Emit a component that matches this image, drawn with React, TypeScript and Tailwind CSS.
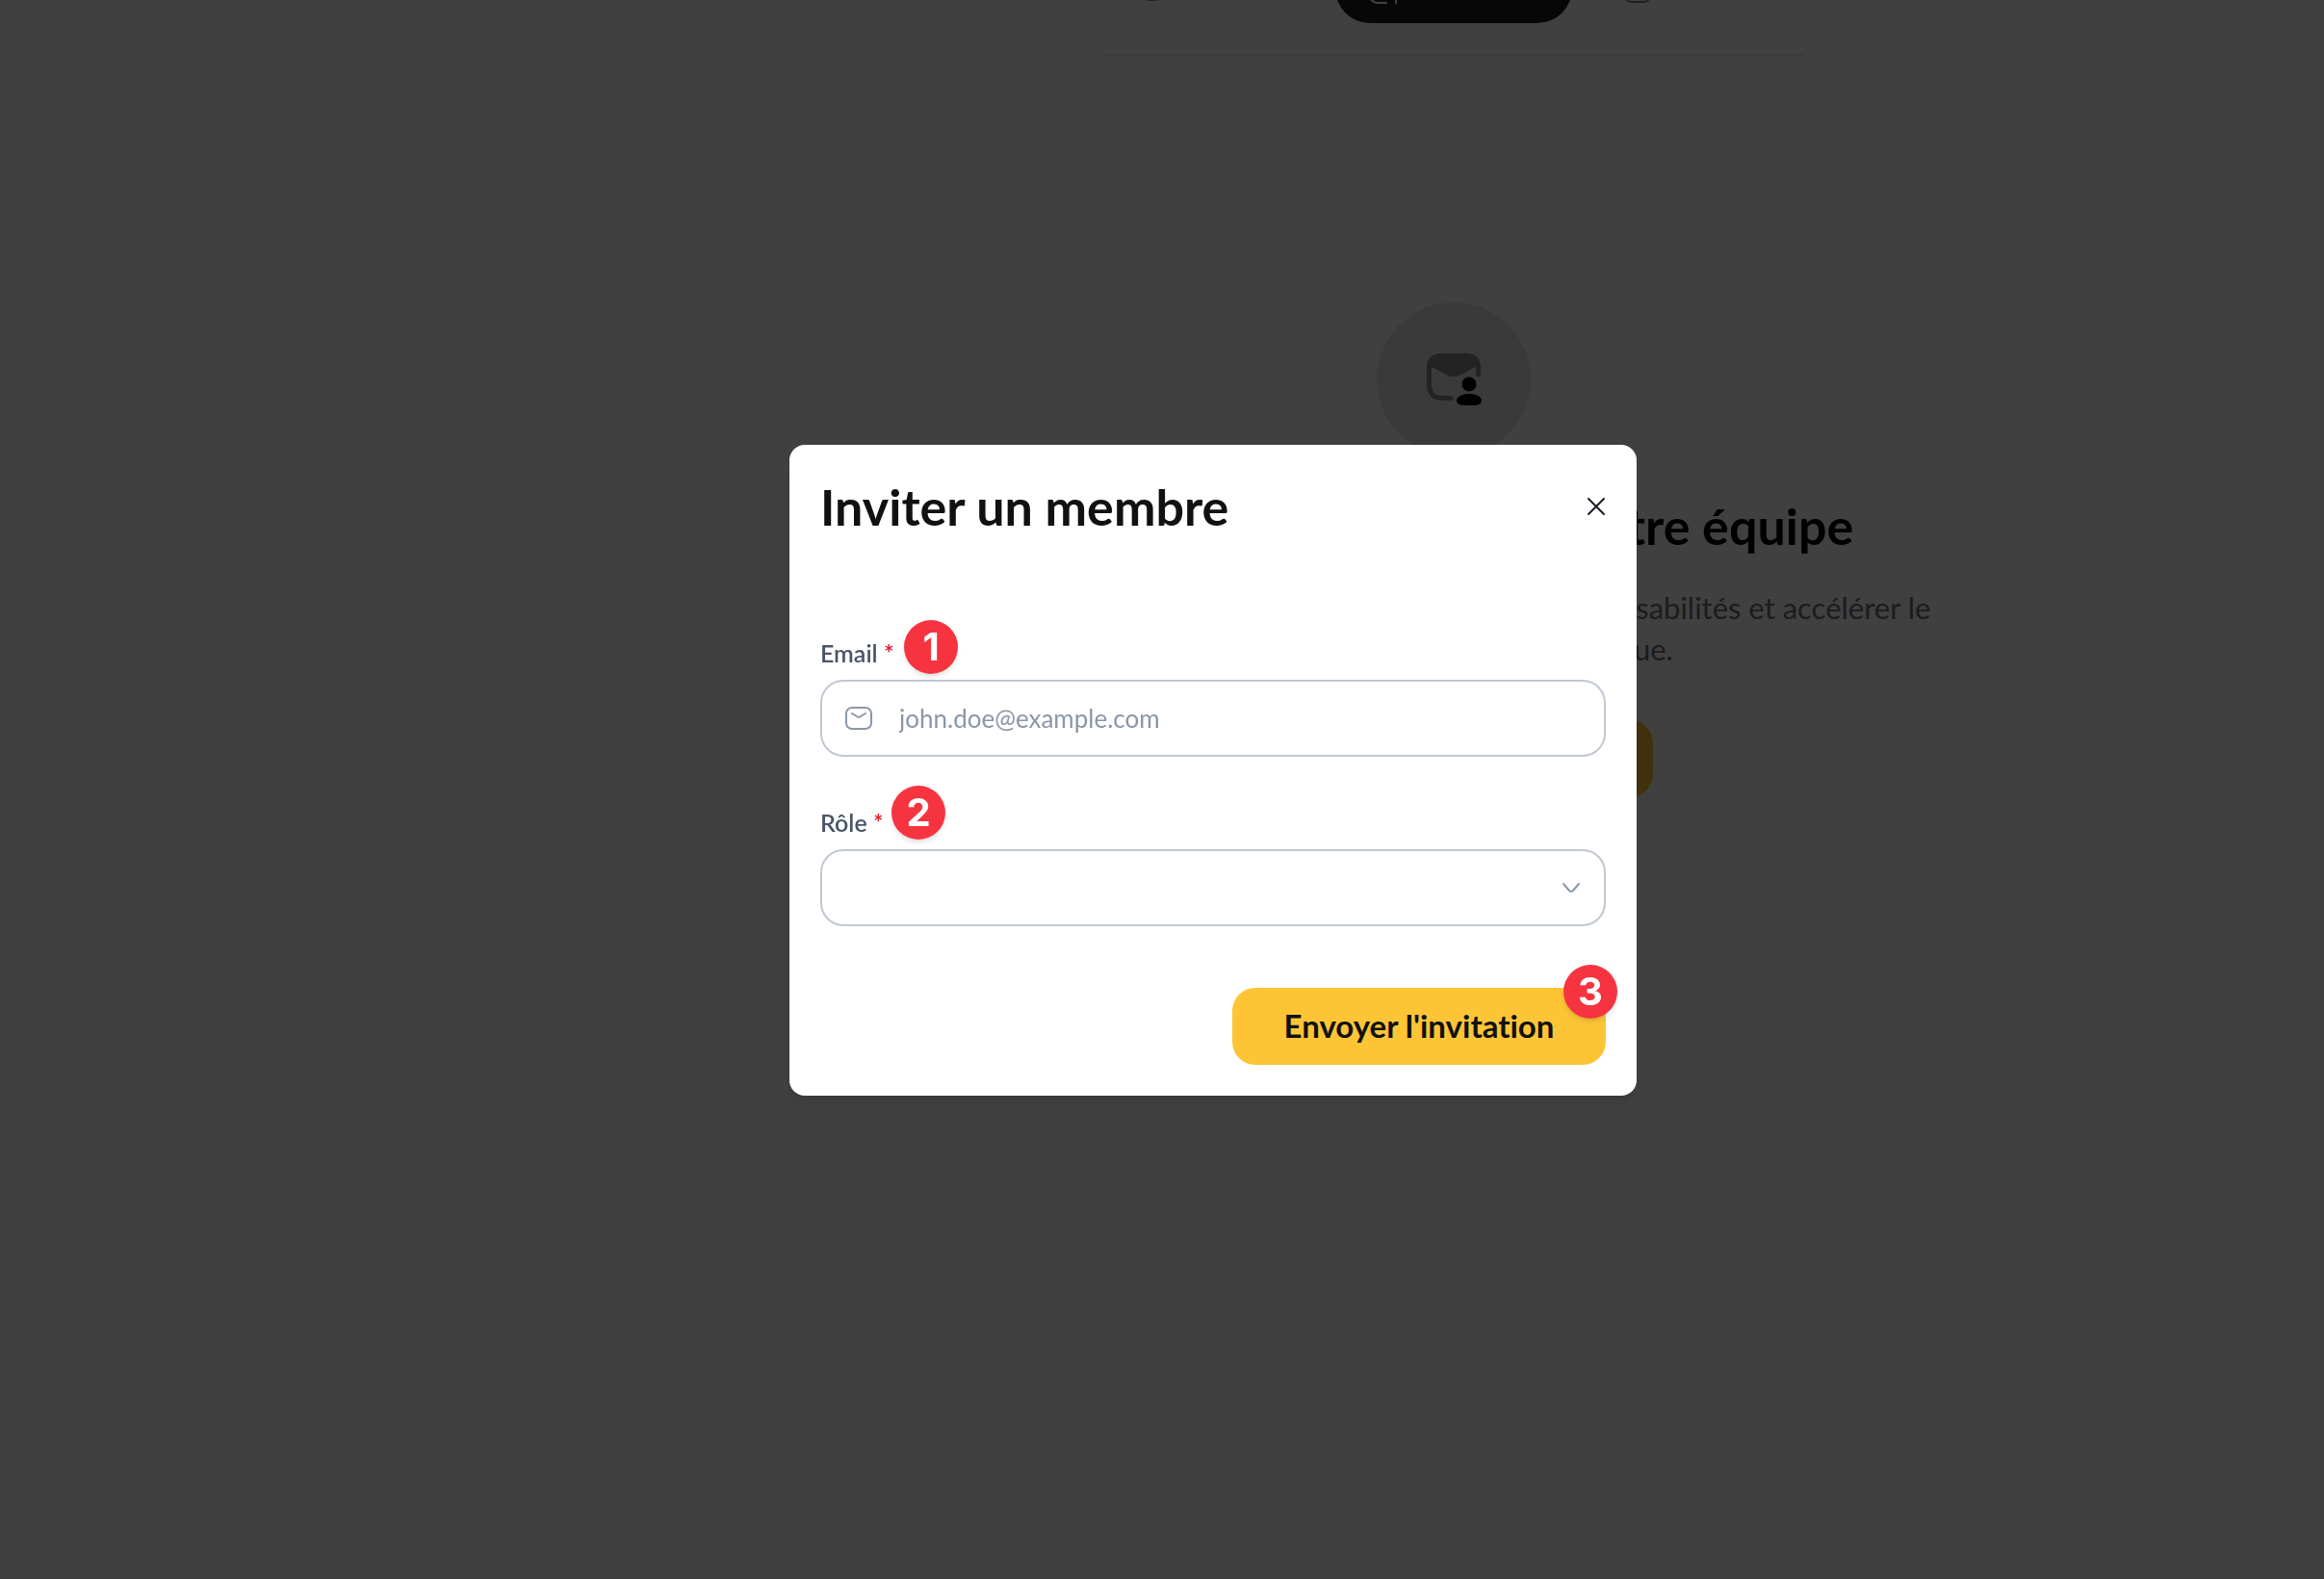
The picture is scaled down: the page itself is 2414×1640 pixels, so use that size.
import { useState } from 'react';
import type { ReactNode } from 'react';
import { clsx } from 'clsx';

const tabs = [
  { id: 'profile', icon: ProfileIcon, label: 'Profil', pad: 'pl-8' },
  { id: 'team', icon: TeamIcon, label: 'Équipe', pad: 'pl-7' },
  { id: 'billing', icon: BillingIcon, label: 'Offre', pad: 'pl-12' },
];

function ProfileIcon() {
  return (
    <svg viewBox="0 0 40 40" className="h-10 w-10" fill="none" stroke="currentColor" strokeWidth="2">
      <circle cx="20" cy="11" r="7" />
      <path d="M6 28c0-5 6-8 14-8s14 3 14 8-6 8-14 8-14-3-14-8Z" />
    </svg>
  );
}

function TeamIcon() {
  return (
    <svg viewBox="0 0 40 40" className="h-10 w-10" fill="none" stroke="currentColor" strokeWidth="2">
      <path d="M26 39h-9c-6 0-9-3-9-9V17c0-6 3-9 9-9h10c6 0 9 3 9 9" />
      <path d="M35 26v14" />
    </svg>
  );
}

function BillingIcon() {
  return (
    <svg viewBox="0 0 40 40" className="h-10 w-10" fill="none" stroke="currentColor" strokeWidth="2">
      <rect x="6" y="10" width="28" height="28" rx="8" />
      <path d="M6 19h28" />
    </svg>
  );
}

function InviteIcon() {
  return (
    <svg viewBox="0 0 60 60" className="h-15 w-15" fill="none">
      <path
        d="M27 49.500H18C9 49.500 4.500 45 4.500 35V20C4.500 10 9 6 18 6h24c9 0 13.500 4 13.500 13v6"
        stroke="#8c8c8c"
        strokeWidth="5"
        strokeLinecap="round"
      />
      <path d="M2 19C2 8 7 3 18 3h24c11 0 16 5 16 16l-5-2-15 8c-6 3-10 3-16 0L7 17Z" fill="#8c8c8c" />
      <circle cx="46" cy="35" r="7.500" fill="#000" />
      <path d="M33 52c0-4 6-7 13-7s13 3 13 7c0 3-3 5-8 5H41c-5 0-8-2-8-5Z" fill="#000" />
    </svg>
  );
}

function MailIcon() {
  return (
    <svg viewBox="0 0 28 24" className="h-6 w-7" fill="none" stroke="currentColor" strokeWidth="2" strokeLinecap="round">
      <rect x="1" y="1" width="26" height="22" rx="6" />
      <path d="m7 7 5 3c1 1 3 1 4 0l5-3" />
    </svg>
  );
}

function Badge({ children, className }: { children: ReactNode; className: string }) {
  return (
    <span
      className={clsx(
        "absolute flex h-14 w-14 items-center justify-center rounded-full bg-[#f63440] font-['Inter',sans-serif] text-[40px] leading-none font-bold text-white shadow-md",
        className
      )}
    >
      {children}
    </span>
  );
}

function InviteModal() {
  const [email, setEmail] = useState('');
  const [role, setRole] = useState('');

  return (
    <div className="fixed inset-0 flex items-center justify-center bg-black/75 pb-10 pl-[106px]">
      <div role="dialog" aria-labelledby="invite-title" className="w-[880px] rounded-2xl bg-white p-8 shadow-lg">
        <div className="flex items-center justify-between">
          <h2 id="invite-title" className="text-[52px] leading-16 font-bold text-[#111111]">
            Inviter un membre
          </h2>
          <button type="button" aria-label="Fermer" className="text-[#1a1d24]">
            <svg viewBox="0 0 20 20" className="h-5 w-5" fill="none" stroke="currentColor" strokeWidth="2" strokeLinecap="round">
              <path d="m2 2 16 16M18 2 2 18" />
            </svg>
          </button>
        </div>

        <form className="mt-25" onSubmit={e => e.preventDefault()}>
          <div className="relative">
            <label htmlFor="email" className="block text-[25px] leading-10 font-semibold text-[#4a5568]">
              Email <span className="text-[#e01020]">*</span>
            </label>
            <Badge className="-top-3.5 left-[87px]">1</Badge>
            <div className="mt-2 flex h-20 items-center gap-7 rounded-3xl border-2 border-[#c1c7d2] px-6 text-[#8a97a8]">
              <MailIcon />
              <input
                id="email"
                type="email"
                value={email}
                onChange={e => setEmail(e.target.value)}
                placeholder="john.doe@example.com"
                className="min-w-0 flex-1 text-[26px] text-[#4a5568] outline-none placeholder:text-[#8a97a8]"
              />
            </div>
          </div>

          <div className="relative mt-12">
            <label htmlFor="role" className="block text-[25px] leading-10 font-semibold text-[#4a5568]">
              Rôle <span className="text-[#e01020]">*</span>
            </label>
            <Badge className="-top-4.5 left-[74px]">2</Badge>
            <div className="relative mt-2">
              <select
                id="role"
                value={role}
                onChange={e => setRole(e.target.value)}
                className="h-20 w-full appearance-none rounded-3xl border-2 border-[#c1c7d2] px-6 text-[26px] text-[#4a5568] outline-none"
              >
                <option value=""></option>
                <option value="admin">Administrateur</option>
                <option value="member">Membre</option>
              </select>
              <svg
                viewBox="0 0 20 12"
                className="pointer-events-none absolute top-[34px] right-[26px] h-3 w-5 text-[#8a97a8]"
                fill="none"
                stroke="currentColor"
                strokeWidth="2"
                strokeLinecap="round"
              >
                <path d="m2 2 6 7c1 1 3 1 4 0l6-7" />
              </svg>
            </div>
          </div>

          <div className="mt-16 flex justify-end">
            <div className="relative">
              <button type="submit" className="h-20 w-[388px] rounded-3xl bg-[#fdc536] text-[33px] font-bold text-[#111111]">
                Envoyer l'invitation
              </button>
              <Badge className="-top-6 -right-3">3</Badge>
            </div>
          </div>
        </form>
      </div>
    </div>
  );
}

export default function App() {
  const [activeTab, setActiveTab] = useState('team');

  return (
    <div className="flex min-h-screen bg-white font-['Lato','Noto_Sans',sans-serif] [font-variant-ligatures:none]">
      <main className="ml-[606px] flex flex-1 flex-col items-center">
        <div className="w-[730px] border-b-2 border-[#e8e8e8] pb-8">
          <nav className="grid h-6 grid-cols-[1fr_246px_1fr] content-end overflow-hidden">
            {tabs.map(tab => {
              const Icon = tab.icon;
              return (
                <button
                  key={tab.id}
                  type="button"
                  aria-label={tab.label}
                  onClick={() => setActiveTab(tab.id)}
                  className={clsx(
                    'flex h-20 items-center rounded-[36px]',
                    tab.pad,
                    activeTab === tab.id ? 'bg-[#1c1c20] text-white' : 'text-[#718096]'
                  )}
                >
                  <Icon />
                </button>
              );
            })}
          </nav>
        </div>

        <section className="mt-64 flex flex-col items-center text-center">
          <div className="flex h-40 w-40 items-center justify-center rounded-full bg-[#e8e8e8]">
            <InviteIcon />
          </div>
          <h1 className="mt-10 text-[52px] leading-16 font-bold text-black">Invitez les membres de votre équipe</h1>
          <p className="mt-8 text-[31px] leading-[43px] text-[#70727c]">
            Mobilisez vos collègues afin de partager les responsabilités et accélérer le
            <br />
            référencement de votre boutique.
          </p>
          <button type="button" className="mt-13 h-20 w-[414px] rounded-3xl bg-[#fdc536] text-[33px] font-bold text-[#111111]">
            Inviter un membre
          </button>
        </section>
      </main>
      <InviteModal />
    </div>
  );
}
